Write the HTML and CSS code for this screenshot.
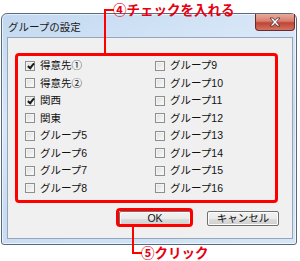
FILE: index.html
```html
<!DOCTYPE html>
<html lang="ja">
<head>
<meta charset="utf-8">
<link rel="stylesheet" href="styles.css">
</head>
<body>
<div class="stage">
  <div class="window">
    <div class="titlebar">
      <span class="title">グループの設定</span>
      <div class="close">
        <svg width="14" height="10" viewBox="0 0 14 10"><path d="M2 1h3l2 2.5L9 1h3L8.5 5 12 9H9L7 6.5 5 9H2l3.5-4z" fill="#fff" stroke="#4a2a2a" stroke-width="0.8"/></svg>
      </div>
    </div>
    <div class="client">
      <div class="list">
        <label class="item"><span class="cb checked"></span>得意先①</label>
        <label class="item"><span class="cb"></span>グループ9</label>
        <label class="item"><span class="cb"></span>得意先②</label>
        <label class="item"><span class="cb"></span>グループ10</label>
        <label class="item"><span class="cb checked"></span>関西</label>
        <label class="item"><span class="cb"></span>グループ11</label>
        <label class="item"><span class="cb"></span>関東</label>
        <label class="item"><span class="cb"></span>グループ12</label>
        <label class="item"><span class="cb"></span>グループ5</label>
        <label class="item"><span class="cb"></span>グループ13</label>
        <label class="item"><span class="cb"></span>グループ6</label>
        <label class="item"><span class="cb"></span>グループ14</label>
        <label class="item"><span class="cb"></span>グループ7</label>
        <label class="item"><span class="cb"></span>グループ15</label>
        <label class="item"><span class="cb"></span>グループ8</label>
        <label class="item"><span class="cb"></span>グループ16</label>
      </div>
      <div class="buttons">
        <div class="btn">OK</div>
        <div class="btn">キャンセル</div>
      </div>
    </div>
  </div>

  <div class="hl hl-list"></div>
  <div class="ln ln1v"></div>
  <div class="ln ln1h"></div>
  <div class="note note1">④チェックを入れる</div>

  <div class="hl hl-ok"></div>
  <div class="ln ln2v"></div>
  <div class="ln ln2h"></div>
  <div class="note note2">⑤クリック</div>
</div>
</body>
</html>
```

FILE: styles.css
```css
html, body {
  margin: 0;
  padding: 0;
  background: #fff;
}
.stage {
  position: relative;
  width: 300px;
  height: 261px;
  overflow: hidden;
  font-family: "Liberation Sans", "Noto Sans CJK JP", sans-serif;
}
.window {
  box-sizing: border-box;
  margin: 13px 0 0 1px;
  width: 296px;
  height: 232px;
  border: 1px solid #5a6a7e;
  border-radius: 6px 6px 3px 3px;
  background: linear-gradient(160deg, #c2d8f0 0%, #d9e8f8 35%, #c8dcf2 60%, #d6e6f7 100%);
  display: flex;
  flex-direction: column;
  box-shadow: inset 0 0 0 1px rgba(255,255,255,0.6);
}
.titlebar {
  height: 23px;
  display: flex;
  justify-content: space-between;
  align-items: flex-start;
}
.title {
  font-family: "Noto Sans CJK JP", sans-serif;
  font-size: 10.5px;
  line-height: 11px;
  color: #1a1a1a;
  margin: 7px 0 0 6px;
}
.close {
  box-sizing: border-box;
  width: 40px;
  height: 17px;
  margin-right: 1px;
  border: 1px solid #6b2a2a;
  border-top: none;
  border-radius: 0 0 4px 4px;
  background: linear-gradient(#e8ab9c 0%, #d77d6e 45%, #c04434 55%, #d47262 100%);
  display: flex;
  align-items: center;
  justify-content: center;
}
.client {
  box-sizing: border-box;
  margin: 0 3px 5px 5px;
  flex: 1;
  background: #f0f0f0;
  border: 1px solid #94a6bb;
  display: flex;
  flex-direction: column;
}
.list {
  display: grid;
  grid-template-columns: 130px 130px;
  grid-auto-rows: 17.5px;
  padding: 19px 0 0 17px;
}
.item {
  display: flex;
  align-items: center;
  gap: 5px;
  font-size: 10.5px;
  color: #111;
  line-height: 11px;
}
.cb {
  box-sizing: border-box;
  width: 10px;
  height: 10px;
  border: 1px solid #8e8f8f;
  background: linear-gradient(135deg, #dedede, #fbfbfb);
  box-shadow: inset 0 0 0 1px #f4f4f4;
  position: relative;
  flex: none;
}
.cb.checked::after {
  content: "";
  position: absolute;
  left: 2.5px;
  top: 0px;
  width: 2px;
  height: 5px;
  border: solid #1a1a1a;
  border-width: 0 2px 2px 0;
  transform: rotate(40deg);
}
.buttons {
  display: flex;
  justify-content: flex-end;
  gap: 16px;
  padding-right: 13px;
  margin-top: 14px;
}
.btn {
  box-sizing: border-box;
  width: 72px;
  height: 15px;
  border: 1px solid #707070;
  border-radius: 2px;
  background: linear-gradient(#f2f2f2 0%, #ebebeb 50%, #dddddd 51%, #cfcfcf 100%);
  box-shadow: inset 0 0 0 1px #fcfcfc;
  font-size: 10.5px;
  line-height: 13px;
  text-align: center;
  color: #111;
}
.hl {
  position: absolute;
  box-sizing: border-box;
  border: 3px solid #ff0000;
  border-radius: 4px;
}
.hl-list { left: 15px; top: 53px; width: 263px; height: 150px; }
.hl-ok { left: 116px; top: 208px; width: 77px; height: 19px; }
.ln { position: absolute; background: #ff0000; }
.ln1v { left: 104px; top: 9px; width: 2px; height: 44px; }
.ln1h { left: 104px; top: 9px; width: 10px; height: 2px; }
.ln2v { left: 132px; top: 227px; width: 2px; height: 27px; }
.ln2h { left: 132px; top: 252px; width: 10px; height: 2px; }
.note {
  position: absolute;
  font-family: "Noto Sans CJK JP", sans-serif;
  color: #e60012;
  font-weight: bold;
  font-size: 13.5px;
  line-height: 15px;
  white-space: nowrap;
}
.note1 { left: 113px; top: 2px; }
.note2 { left: 141px; top: 245px; }
```
